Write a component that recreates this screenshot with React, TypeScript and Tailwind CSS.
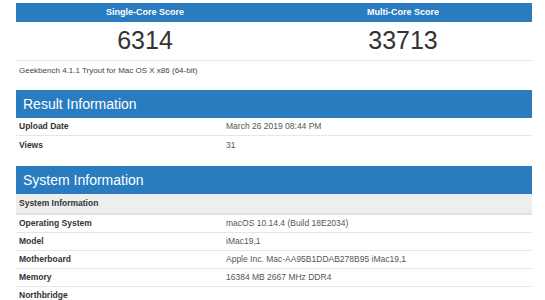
import React from "react";

const resultRows = [
  ["Upload Date", "March 26 2019 08:44 PM"],
  ["Views", "31"],
];

const systemRows = [
  ["Operating System", "macOS 10.14.4 (Build 18E2034)"],
  ["Model", "iMac19,1"],
  ["Motherboard", "Apple Inc. Mac-AA95B1DDAB278B95 iMac19,1"],
  ["Memory", "16384 MB 2667 MHz DDR4"],
  ["Northbridge", ""],
];

function SectionHeader({ title }: { title: string }) {
  return (
    <div className="h-[28px] bg-[#2a7cc0] flex items-center px-[7px] text-white text-[14px] leading-none">
      {title}
    </div>
  );
}

function Row({ label, value, last }: { label: string; value: string; last?: boolean }) {
  return (
    <div className={`flex h-[18px] items-center text-[8.5px] ${last ? "" : "border-b border-[#e6e6e6]"}`}>
      <div className="w-[210px] px-[3px] font-bold text-[#333]">{label}</div>
      <div className="text-[#555]">{value}</div>
    </div>
  );
}

export default function App() {
  return (
    <div className="bg-white w-[545px] h-[300px] overflow-hidden pt-[3px] font-['Liberation_Sans',Arial,sans-serif]">
      <div className="ml-4 w-[516px]">
        {/* Scores */}
        <div className="grid grid-cols-2 h-[19px] bg-[#2a7cc0] text-white font-bold text-[9px]">
          <div className="flex items-center justify-center">Single-Core Score</div>
          <div className="flex items-center justify-center">Multi-Core Score</div>
        </div>
        <div className="grid grid-cols-2 h-[39px] border-b border-[#e6e6e6] text-[25px] text-[#333]">
          <div className="flex items-center justify-center">6314</div>
          <div className="flex items-center justify-center">33713</div>
        </div>
        <div className="h-[19px] flex items-center px-[3px] text-[8px] text-[#444]">
          Geekbench 4.1.1 Tryout for Mac OS X x86 (64-bit)
        </div>

        {/* Result Information */}
        <div className="mt-[10px]">
          <SectionHeader title="Result Information" />
          {resultRows.map(([label, value], i) => (
            <Row key={label} label={label} value={value} last={i === resultRows.length - 1} />
          ))}
        </div>

        {/* System Information */}
        <div className="mt-[12px]">
          <SectionHeader title="System Information" />
          <div className="h-[21px] bg-[#eeeeee] border-b-2 border-[#e0e0e0] flex items-center px-[3px] text-[8.5px] font-bold text-[#333]">
            System Information
          </div>
          {systemRows.map(([label, value]) => (
            <Row key={label} label={label} value={value} />
          ))}
        </div>
      </div>
    </div>
  );
}
